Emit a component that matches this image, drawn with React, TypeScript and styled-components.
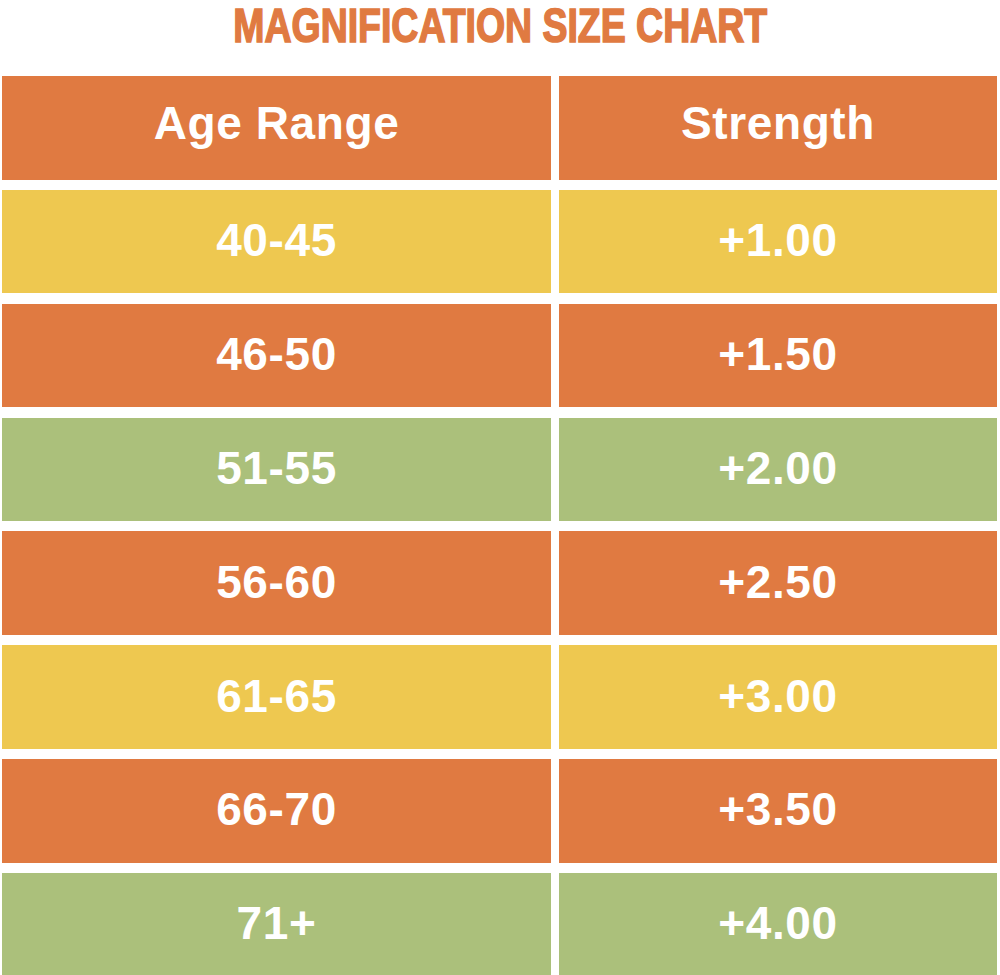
import * as React from "react";
import styled, { createGlobalStyle } from "styled-components";

type Tone = "orange" | "yellow" | "green";

type Row = {
  age: string;
  strength: string;
  tone: Tone;
};

const rows: Row[] = [
  { age: "40-45", strength: "+1.00", tone: "yellow" },
  { age: "46-50", strength: "+1.50", tone: "orange" },
  { age: "51-55", strength: "+2.00", tone: "green" },
  { age: "56-60", strength: "+2.50", tone: "orange" },
  { age: "61-65", strength: "+3.00", tone: "yellow" },
  { age: "66-70", strength: "+3.50", tone: "orange" },
  { age: "71+", strength: "+4.00", tone: "green" },
];

const tones: Record<Tone, string> = {
  orange: "#e07a41",
  yellow: "#eec850",
  green: "#abc07b",
};

export default function App() {
  return (
    <Page>
      <GlobalStyle />
      <TitleBar>
        <Title>MAGNIFICATION SIZE CHART</Title>
      </TitleBar>
      <Chart>
        <Cell tone="orange" head>
          Age Range
        </Cell>
        <Cell tone="orange" head>
          Strength
        </Cell>
        {rows.map((row) => (
          <React.Fragment key={row.age}>
            <Cell tone={row.tone}>{row.age}</Cell>
            <Cell tone={row.tone}>{row.strength}</Cell>
          </React.Fragment>
        ))}
      </Chart>
    </Page>
  );
}

const GlobalStyle = createGlobalStyle`
  html, body {
    margin: 0;
    padding: 0;
    background: #ffffff;
  }
`;

const Page = styled.div`
  width: 1000px;
  height: 975px;
  background: #ffffff;
  font-family: "Liberation Sans", Arial, sans-serif;
  overflow: hidden;
`;

const TitleBar = styled.div`
  height: 76px;
  display: flex;
  justify-content: center;
  align-items: flex-start;
`;

const Title = styled.h1`
  margin: 0;
  font-family: "Liberation Sans", Arial, sans-serif;
  font-size: 48px;
  font-weight: 700;
  line-height: 1.1;
  color: #e07a41;
  white-space: nowrap;
  transform: scaleX(0.78);
  -webkit-text-stroke: 1.6px #e07a41;
`;

const Chart = styled.div`
  display: grid;
  grid-template-columns: 549px 438px;
  grid-auto-rows: 103.5px;
  column-gap: 8px;
  row-gap: 10.36px;
  padding-left: 2px;
`;

const Cell = styled.div<{ tone: Tone; head?: boolean }>`
  display: flex;
  align-items: center;
  justify-content: center;
  background: ${(p) => tones[p.tone]};
  color: #ffffff;
  font-weight: 700;
  font-size: 46px;
  letter-spacing: 0.6px;
  padding-bottom: ${(p) => (p.head ? "10px" : "3px")};
  box-sizing: border-box;
`;
